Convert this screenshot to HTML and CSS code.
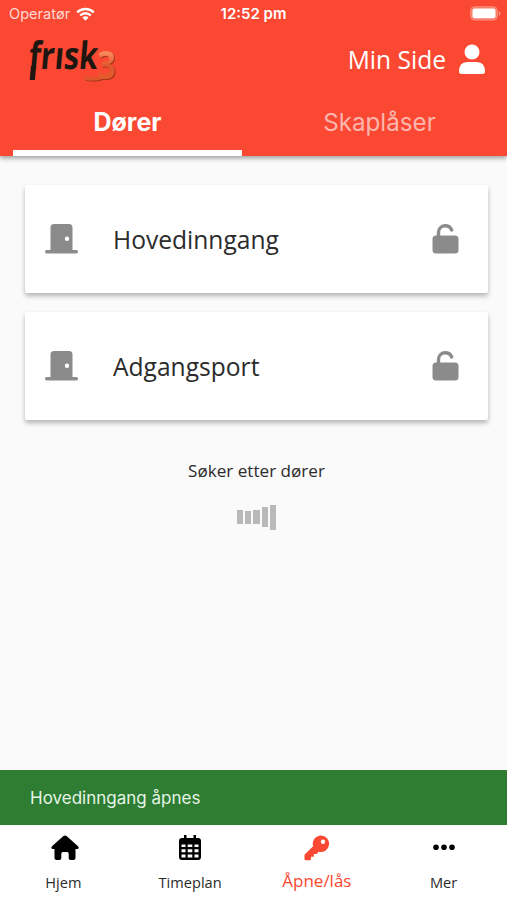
FILE: index.html
```html
<!DOCTYPE html>
<html lang="no">

<head>
    <meta charset="UTF-8">
    <meta name="viewport" content="width=device-width, initial-scale=1.0">
    <title>frisk3</title>
    <link rel="stylesheet" href="styles.css">
</head>

<body>
    <div class="app">
        <header class="header">
            <div class="status">
                <div class="carrier">
                    <span>Operatør</span>
                    <svg width="19" height="14" viewBox="0 0 19 14" fill="none" stroke="#fff" stroke-width="2.4">
                        <path d="M1.2 5.4a11.8 11.8 0 0 1 16.6 0" />
                        <path d="M4.2 8.5a7.5 7.5 0 0 1 10.6 0" />
                        <path d="M6.4 10.6a4.4 4.4 0 0 1 6.2 0L9.5 13.8z" fill="#fff" stroke="none" />
                    </svg>
                </div>
                <span class="time">12:52 pm</span>
                <svg class="battery" width="31" height="15" viewBox="0 0 31 15">
                    <rect x=".7" y=".7" width="26.6" height="13.4" rx="4" fill="#fb7b69" stroke="#fc8d7c" />
                    <rect x="2.5" y="2.5" width="23" height="9.8" rx="2" fill="#fff" />
                    <path d="M28.8 5v5q1.7-.8 1.7-2.5T28.8 5z" fill="#fc9a8b" />
                </svg>
            </div>
            <div class="top">
                <svg class="logo" width="98" height="50" viewBox="0 0 98 50">
                    <defs>
                        <linearGradient id="three" x1="0" y1="0" x2="0" y2="1">
                            <stop offset="0.3" stop-color="#f98a5c" />
                            <stop offset="0.55" stop-color="#e2552c" />
                            <stop offset="1" stop-color="#e8602c" />
                        </linearGradient>
                    </defs>
                    <g class="logo-red">
                        <path d="M62 44q8 2 15-.5" fill="none" stroke="#e0562b" stroke-width="3.5" stroke-linecap="round" />
                        <text class="logo-three" x="73" y="45" textLength="19" lengthAdjust="spacingAndGlyphs" fill="url(#three)">3</text>
                    </g>
                    <g transform="translate(4 35) skewX(-5)">
                        <text class="logo-text" x="0" y="0" textLength="69" lengthAdjust="spacingAndGlyphs">frısk</text>
                        <path d="M5.300-3V11" stroke="#1d1611" stroke-width="5.200" />
                    </g>
                </svg>
                <a class="profile">
                    <span>Min Side</span>
                    <svg width="26" height="31" viewBox="0 0 26 31" fill="#fff">
                        <circle cx="13" cy="8" r="7.5" />
                        <path d="M0 27.5C0 21 3.5 18 9 18h8c5.5 0 9 3 9 9.5 0 1.500-1 2.500-2.500 2.500h-21C1 30 0 29 0 27.500z" />
                    </svg>
                </a>
            </div>
            <nav class="tabs">
                <a class="tab active">Dører</a>
                <a class="tab">Skaplåser</a>
            </nav>
        </header>

        <main class="content">
            <div class="card">
                <svg class="door" width="33" height="30" viewBox="0 0 33 30">
                    <path d="M5.500 26V3.500Q5.500 0 9 0h15q3.500 0 3.500 3.500V26h4q1.500 0 1.500 1.800t-1.500 1.700h-30Q0 29.500 0 27.800T1.500 26zM22 12.500a2.200 2.200 0 1 0 0 4.400 2.200 2.200 0 0 0 0-4.400z" />
                </svg>
                <span class="name">Hovedinngang</span>
                <svg class="lock" width="27" height="30" viewBox="0 0 27 30">
                    <rect x=".5" y="11.5" width="26" height="18" rx="3.5" />
                    <path d="M6.500 13V8.500C6.500 4.500 9.500 1.700 13.300 1.700c3 0 5.200 1.500 6.400 4.300" />
                </svg>
            </div>
            <div class="card">
                <svg class="door" width="33" height="30" viewBox="0 0 33 30">
                    <path d="M5.500 26V3.500Q5.500 0 9 0h15q3.500 0 3.500 3.500V26h4q1.500 0 1.500 1.800t-1.500 1.700h-30Q0 29.500 0 27.800T1.500 26zM22 12.500a2.200 2.200 0 1 0 0 4.400 2.200 2.200 0 0 0 0-4.400z" />
                </svg>
                <span class="name">Adgangsport</span>
                <svg class="lock" width="27" height="30" viewBox="0 0 27 30">
                    <rect x=".5" y="11.5" width="26" height="18" rx="3.5" />
                    <path d="M6.500 13V8.500C6.500 4.500 9.500 1.700 13.300 1.700c3 0 5.200 1.500 6.400 4.300" />
                </svg>
            </div>
            <p class="searching">Søker etter dører</p>
            <div class="loader">
                <i class="bar"></i>
                <i class="bar small"></i>
                <i class="bar"></i>
                <i class="bar large"></i>
                <i class="bar full"></i>
            </div>
        </main>

        <div class="snackbar">Hovedinngang åpnes</div>

        <nav class="bottom">
            <a class="item">
                <svg class="home" width="28" height="26" viewBox="0 0 28 26">
                    <path d="M14 .5q.9 0 1.600.6L27 11.200q1 1 .5 2t-1.800.9H24.500V23q0 2-2 2h-3q-1.800 0-1.800-1.800v-4.500q0-1.700-1.700-1.700h-4q-1.700 0-1.700 1.700v4.500q0 1.800-1.800 1.800h-3q-2 0-2-2v-8.900H2.300q-1.300 0-1.800-.9t.5-2L12.400 1.100Q13.100.5 14 .5z" />
                </svg>
                <span>Hjem</span>
            </a>
            <a class="item">
                <svg width="22" height="26" viewBox="0 0 22 26">
                    <path fill-rule="evenodd" d="M5 0h2.500v3h7V0H17v3h2q3 0 3 3v16q0 3-3 3H3q-3 0-3-3V6q0-3 3-3h2zM2.500 9.500V12h4V9.500zM8.700 9.500V12h4.600V9.500zM15.500 9.500V12h4V9.500zM2.500 14.200v3h4v-3zM8.700 14.200v3h4.600v-3zM15.500 14.200v3h4v-3zM2.500 19.400v3h4v-3zM8.700 19.400v3h4.600v-3zM15.500 19.400v3h4v-3z" />
                </svg>
                <span>Timeplan</span>
            </a>
            <a class="item current">
                <svg width="26" height="26" viewBox="0 0 26 26">
                    <path fill-rule="evenodd" d="M17 .5a8.300 8.300 0 1 1-2.400 16.300L12.500 19H9.800v2.800H7V24q0 1.200-1.200 1.200H1.700Q.5 25.200.5 24v-4.200L9.100 11.200A8.300 8.300 0 0 1 17 .5zM19 4.600a2.200 2.200 0 1 0 0 4.400 2.200 2.200 0 0 0 0-4.400z" />
                </svg>
                <span>Åpne/lås</span>
            </a>
            <a class="item">
                <svg width="22" height="26" viewBox="0 0 22 26">
                    <circle cx="3" cy="12.3" r="2.8" />
                    <circle cx="11" cy="12.3" r="2.8" />
                    <circle cx="19" cy="12.3" r="2.8" />
                </svg>
                <span>Mer</span>
            </a>
        </nav>
    </div>
</body>

</html>
```
FILE: styles.css
```css
* {
    margin: 0;
    padding: 0;
    box-sizing: border-box;
}

body {
    font-family: "Open Sans", "Noto Sans", sans-serif;
    color: #2b2b2b;
    background-color: #fafafa;
}

svg {
    display: block;
}

.app {
    height: 900px;
    display: flex;
    flex-direction: column;
    overflow: hidden;
}

.header {
    height: 156px;
    display: flex;
    flex-direction: column;
    background-color: #fa4832;
    color: #fff;
    box-shadow: 0 2px 5px rgba(0, 0, 0, 0.4);
}

.status {
    height: 27px;
    padding: 0 9px;
    display: grid;
    grid-template-columns: 1fr auto 1fr;
    align-items: center;
    font-family: Inter, sans-serif;
    font-size: 14.6px;
}

.carrier {
    display: flex;
    align-items: center;
    gap: 6px;
    color: #ffd9d3;
}

.time {
    font-weight: 600;
    font-size: 15px;
}

.battery {
    justify-self: end;
    margin-right: -3px;
}

.top {
    height: 66px;
    padding: 0 22px 2px 24px;
    display: flex;
    justify-content: space-between;
    align-items: center;
}

.logo {
    overflow: visible;
}

.logo-text {
    font-size: 38px;
    font-weight: 700;
    fill: #1d1611;
}

.logo-three {
    font-size: 40px;
    font-weight: 700;
}

.logo-red {
    filter: drop-shadow(1px 1px 0 #a5371c);
}

.profile {
    display: flex;
    align-items: center;
    gap: 13px;
    font-size: 24.6px;
}

.tabs {
    flex: 1;
    padding: 0 13px;
    display: flex;
    gap: 23px;
    font-family: Inter, sans-serif;
    font-size: 24.2px;
}

.tab {
    flex: 1;
    padding-top: 15px;
    text-align: center;
    line-height: 30px;
    color: #fdb6ad;
    border-bottom: 6px solid transparent;
}

.tab.active {
    padding-top: 14px;
    font-size: 25px;
    font-weight: 700;
    color: #fff;
    border-color: #fff;
}

.content {
    flex: 1;
    padding: 29px 19px 0 25px;
}

.card {
    height: 108px;
    margin-bottom: 19px;
    padding: 0 29px 0 20px;
    display: flex;
    align-items: center;
    background-color: #fff;
    border-radius: 2px;
    box-shadow: 0 3px 5px rgba(0, 0, 0, 0.28);
}

.door {
    fill: #8b8b8b;
}

.name {
    flex: 1;
    padding-left: 35px;
    font-size: 24.6px;
    line-height: 34px;
    padding-top: 1px;
}

.lock {
    fill: #8b8b8b;
}

.lock path {
    fill: none;
    stroke: #8b8b8b;
    stroke-width: 3.4;
    stroke-linecap: round;
}

.searching {
    margin-top: 39px;
    font-size: 17.1px;
    line-height: 24px;
    text-align: center;
}

.loader {
    height: 26px;
    margin-top: 21px;
    display: flex;
    justify-content: center;
    align-items: center;
    gap: 2px;
}

.bar {
    width: 6.2px;
    height: 14px;
    background-color: #b9b9b9;
}

.bar.small {
    height: 13px;
}

.bar.large {
    height: 20px;
}

.bar.full {
    height: 25px;
}

.snackbar {
    height: 55px;
    padding-left: 30px;
    line-height: 56px;
    font-family: Inter, sans-serif;
    font-size: 17px;
    color: #e6f5e6;
    background-color: #2e7d32;
}

.bottom {
    height: 75px;
    display: flex;
    background-color: #fff;
}

.item {
    flex: 1;
    padding-top: 10px;
    display: flex;
    flex-direction: column;
    align-items: center;
    font-size: 14.6px;
}

.item svg {
    fill: #000;
}

.item .home {
    margin-left: 4px;
}

.item span {
    margin-top: 11px;
    line-height: 20px;
}

.item.current {
    font-size: 17px;
    color: #fa4832;
}

.item.current svg {
    fill: #fa4832;
}

.item.current span {
    margin-top: 10px;
}
```
